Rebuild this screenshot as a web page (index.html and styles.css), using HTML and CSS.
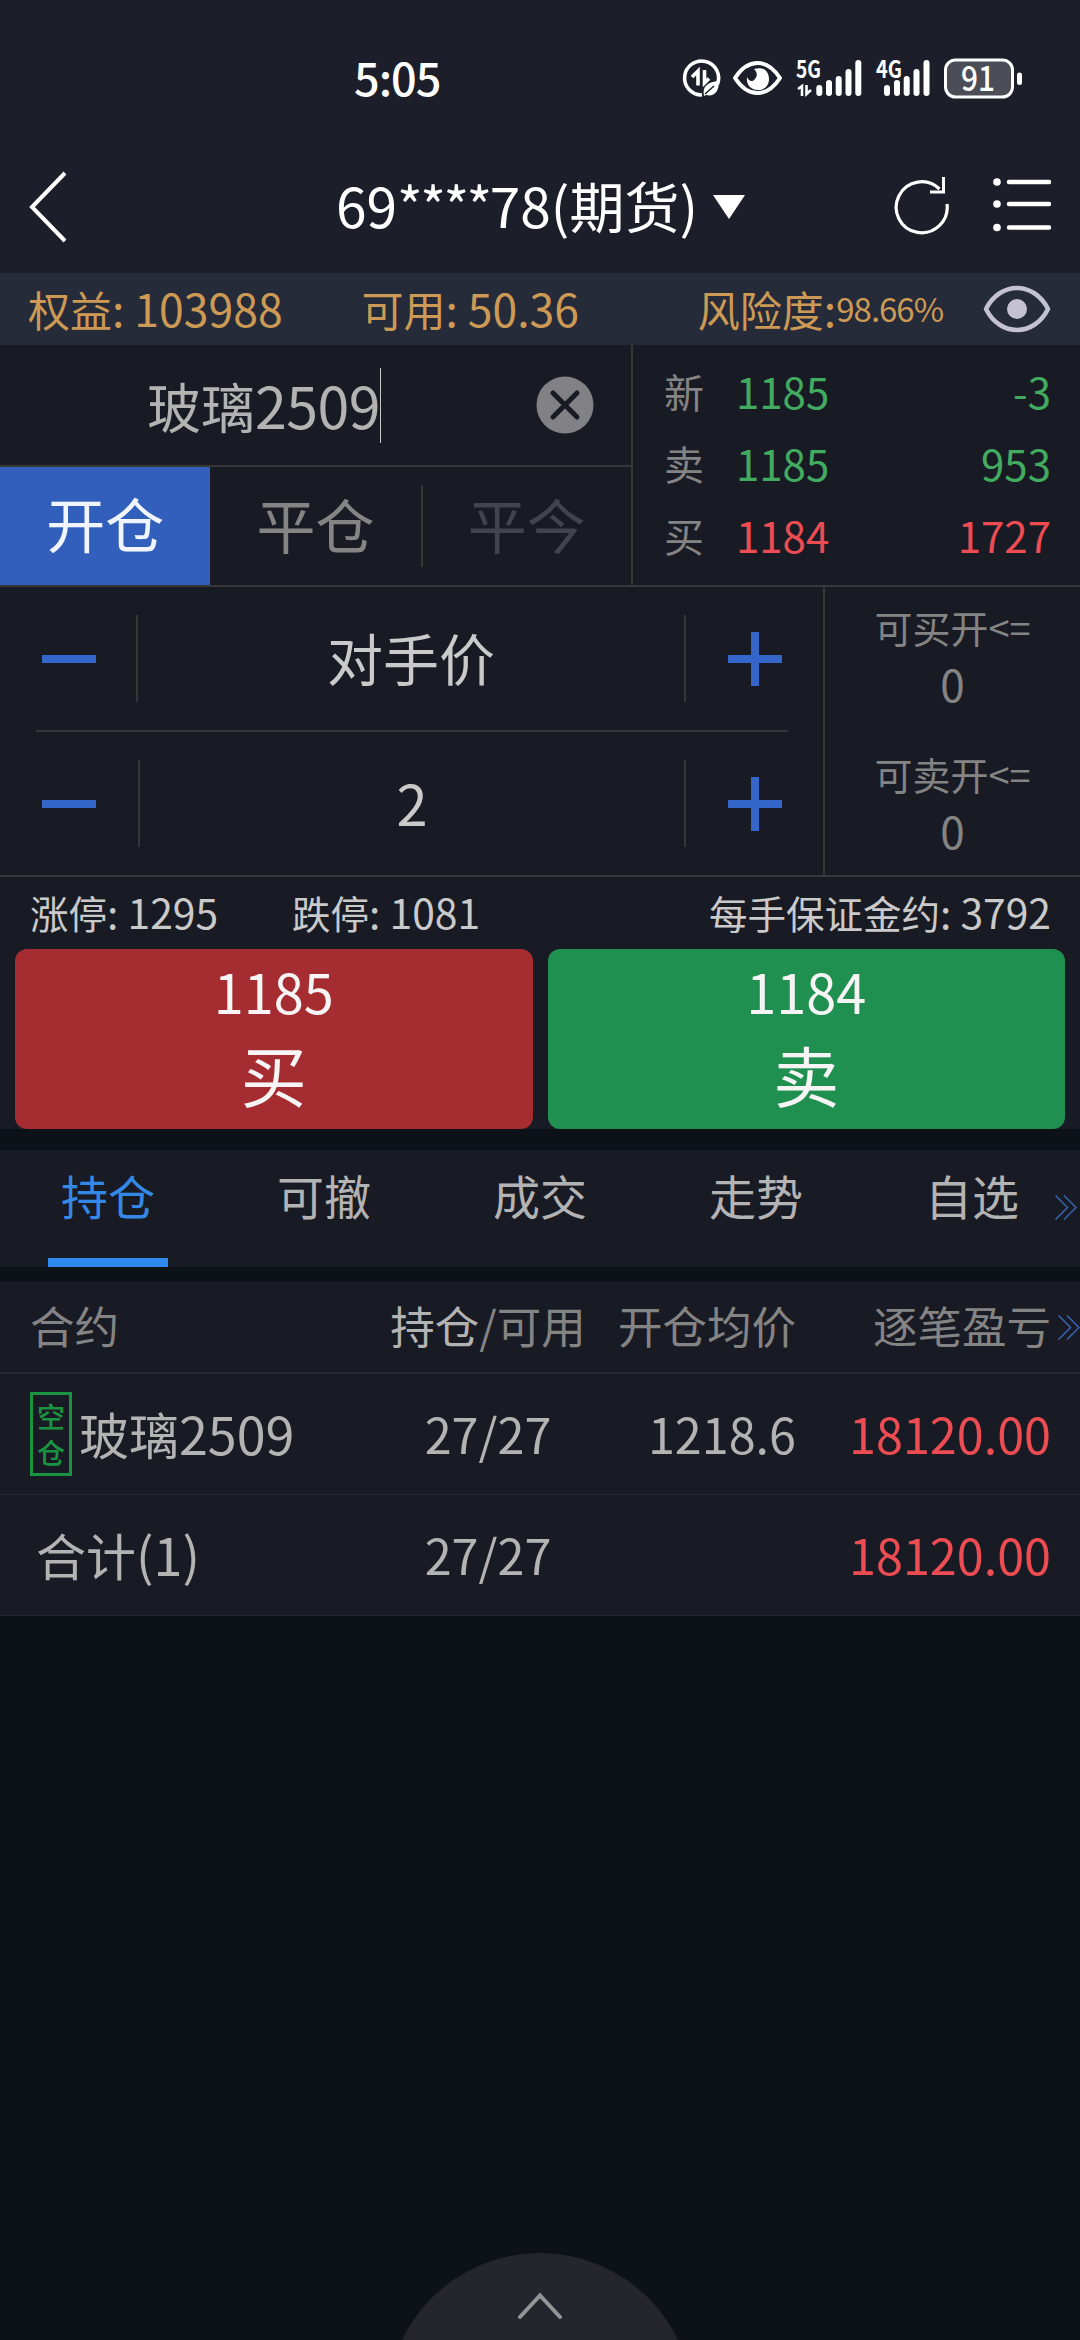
FILE: index.html
```
<!DOCTYPE html>
<html lang="zh-CN">
<head>
    <meta charset="UTF-8">
    <meta name="viewport" content="width=device-width, initial-scale=1.0">
    <title>期货交易</title>
    <link rel="stylesheet" href="styles.css">
</head>
<body>
    <div class="status-bar">
        <span class="time">5:05</span>
        <svg class="status-icons" width="390" height="50" viewBox="0 0 390 50">
            <!-- 省流量 -->
            <path d="M36.5 30A17 17 0 1 0 21 41" fill="none" stroke="#fff" stroke-width="3.6"/>
            <path d="M11 23L17 17V31.500M23.500 16V29L28 24.500" fill="none" stroke="#fff" stroke-width="3.600"/>
            <path d="M23 42C21 32 27 28 38 27C38 38 33 43 25 41Z" fill="#fff"/>
            <path d="M24 40L33 32" stroke="#1c1f29" stroke-width="1.500"/>
            <!-- 护眼模式 -->
            <path d="M54 24C67 4 86 4 99 24C86 44 67 44 54 24Z" fill="none" stroke="#fff" stroke-width="4" stroke-linejoin="round"/>
            <path d="M73 15C83 12 88 18 88 25C88 32 83 36 77 36C70 36 65 31 66 23C68 28 72 28 74 25C77 21 76 18 73 15Z" fill="#fff"/>
            <text x="115" y="24" class="net" textLength="25" lengthAdjust="spacingAndGlyphs">5G</text>
            <path d="M117 35L121 32V42M125.500 31V40L130 36" fill="none" stroke="#fff" stroke-width="2.600"/>
            <path d="M138.300 34V39M148 29V39M157.700 25V39M167.500 18V39M177.300 9V39" stroke="#fff" stroke-width="6" stroke-linecap="round"/>
            <text x="195" y="24" class="net" textLength="26" lengthAdjust="spacingAndGlyphs">4G</text>
            <path d="M206 34V39M216 29V39M225.700 25V39M235.500 18V39M245.500 9V39" stroke="#fff" stroke-width="6" stroke-linecap="round"/>
            <!-- 电量 -->
            <rect x="264.500" y="6" width="67" height="37" rx="10" fill="#4c4e57" stroke="#fff" stroke-width="3"/>
            <rect x="336" y="18.500" width="5" height="12.500" rx="2.500" fill="#fff"/>
            <text x="297" y="36.500" class="battery" textLength="34" lengthAdjust="spacingAndGlyphs">91</text>
        </svg>
    </div>

    <div class="nav-bar">
        <svg class="back" width="40" height="74" viewBox="0 0 40 74">
            <path d="M36 3L3 37L36 71" fill="none" stroke="#fff" stroke-width="4"/>
        </svg>
        <div class="account">
            <span class="account-name">69<span class="stars">****</span>78(期货)</span>
            <svg width="32" height="24" viewBox="0 0 32 24"><path d="M0 0H32L16 24Z" fill="#fff"/></svg>
        </div>
        <div class="nav-actions">
            <svg width="56" height="60" viewBox="0 0 56 60">
                <path d="M53 28A25.500 25.500 0 1 1 45.500 13" fill="none" stroke="#fff" stroke-width="3.200"/>
                <path d="M49.500 1V16H36" fill="none" stroke="#fff" stroke-width="3"/>
            </svg>
            <svg width="58" height="60" viewBox="0 0 58 60">
                <path d="M16 6H56M16 28H56M16 51.500H56" stroke="#fff" stroke-width="4.500" stroke-linecap="round"/>
                <circle cx="4" cy="6" r="3.800" fill="#fff"/>
                <circle cx="4" cy="28" r="3.800" fill="#fff"/>
                <circle cx="4" cy="51.500" r="3.800" fill="#fff"/>
            </svg>
        </div>
    </div>

    <div class="funds">
        <span class="equity">权益<span class="num">: 103988</span></span>
        <span class="available">可用<span class="num">: 50.36</span></span>
        <span class="risk">风险度<span class="num">:</span></span>
        <span class="risk-value">98.66%</span>
        <svg width="68" height="48" viewBox="0 0 68 48">
            <path d="M3 24C17-4 51-4 65 24C51 52 17 52 3 24Z" fill="none" stroke="#c4c2d2" stroke-width="4.500" stroke-linejoin="round"/>
            <circle cx="34" cy="24" r="10" fill="#c4c2d2"/>
        </svg>
    </div>

    <div class="contract">
        <div class="contract-left">
            <div class="contract-input">
                <span>玻璃<span class="num">2509</span></span>
                <i class="cursor"></i>
                <svg class="clear" width="58" height="58" viewBox="0 0 58 58">
                    <circle cx="29" cy="29" r="28.500" fill="#828186"/>
                    <path d="M17 17L41 41M41 17L17 41" stroke="#191b24" stroke-width="5" stroke-linecap="round"/>
                </svg>
            </div>
            <div class="offset-tabs">
                <div class="offset active">开仓</div>
                <div class="offset">平仓</div>
                <div class="offset disabled">平今</div>
            </div>
        </div>
        <div class="quotes">
            <div class="quote green"><label>新</label><span>1185</span><b>-3</b></div>
            <div class="quote green"><label>卖</label><span>1185</span><b>953</b></div>
            <div class="quote red"><label>买</label><span>1184</span><b>1727</b></div>
        </div>
    </div>

    <div class="order">
        <div class="steppers">
            <div class="stepper order-price">
                <div class="step minus"><i></i></div>
                <div class="step-value">对手价</div>
                <div class="step plus"><i></i></div>
            </div>
            <div class="stepper order-amount">
                <div class="step minus"><i></i></div>
                <div class="step-value">2</div>
                <div class="step plus"><i></i></div>
            </div>
        </div>
        <div class="openable">
            <div><p>可买开&lt;=</p><p class="count">0</p></div>
            <div><p>可卖开&lt;=</p><p class="count">0</p></div>
        </div>
    </div>

    <div class="limits">
        <span class="limit-up">涨停<span class="num">: 1295</span></span>
        <span>跌停<span class="num">: 1081</span></span>
        <span class="margin">每手保证金约<span class="num">: 3792</span></span>
    </div>
    <div class="trade-buttons">
        <div class="trade buy"><span>1185</span><b>买</b></div>
        <div class="trade sell"><span>1184</span><b>卖</b></div>
    </div>

    <div class="tabs">
        <div class="tab active">持仓</div>
        <div class="tab">可撤</div>
        <div class="tab">成交</div>
        <div class="tab">走势</div>
        <div class="tab">自选</div>
        <svg class="more tabs-more" width="22" height="25" viewBox="0 0 22 25"><path d="M.5.500L12.500 12.500L.5 24.500M9 .5L21 12.500L9 24.500"/></svg>
    </div>

    <div class="positions">
        <div class="row head">
            <div class="name">合约</div>
            <div class="volume"><em>持仓</em>/可用</div>
            <div class="price">开仓均价</div>
            <div class="profit">逐笔盈亏</div>
            <svg class="more head-more" width="22" height="25" viewBox="0 0 22 25"><path d="M.5.500L12.500 12.500L.5 24.500M9 .5L21 12.500L9 24.500"/></svg>
        </div>
        <div class="row">
            <div class="name"><span class="side">空仓</span>玻璃<span class="num">2509</span></div>
            <div class="volume">27/27</div>
            <div class="price">1218.6</div>
            <div class="profit">18120.00</div>
        </div>
        <div class="row total">
            <div class="name">合计<span class="num">(1)</span></div>
            <div class="volume">27/27</div>
            <div class="price"></div>
            <div class="profit">18120.00</div>
        </div>
    </div>

    <div class="bottom">
        <div class="drawer">
            <svg width="44" height="28" viewBox="0 0 44 28"><path d="M2 25L22 3.500L42 25" fill="none" stroke="#949496" stroke-width="4" stroke-linecap="round"/></svg>
        </div>
    </div>
</body>
</html>
```
FILE: styles.css
```
* {
    margin: 0;
    padding: 0;
    box-sizing: border-box;
}

body {
    width: 1080px;
    height: 2340px;
    display: flex;
    flex-direction: column;
    overflow: hidden;
    background-color: #0d1118;
    color: #b4b3b4;
    font-family: "Noto Sans CJK SC", sans-serif;
    white-space: nowrap;
}

svg {
    display: block;
    flex: none;
}

b, em, i {
    font-weight: normal;
    font-style: normal;
}

.num {
    font-size: 1.06em;
}

.green { color: #43ab60; }
.red { color: #ee4c53; }

/* 顶部 */
.status-bar {
    height: 140px;
    display: flex;
    align-items: flex-start;
    padding: 54px 0 0 354px;
    background-color: #1c1f29;
    color: #fff;
}

.status-icons {
    overflow: visible;
}

.time {
    width: 327px;
    font-size: 45px;
    font-weight: 500;
    line-height: 45px;
    letter-spacing: -1px;
}

.net {
    fill: #fff;
    font-size: 24px;
    font-weight: 700;
}

.battery {
    fill: #fff;
    font-size: 34px;
    font-weight: 500;
    text-anchor: middle;
}

.nav-bar {
    height: 133px;
    display: flex;
    align-items: center;
    padding: 0 29px 0 29px;
    background-color: #1c1f29;
    color: #fff;
}

.account {
    display: flex;
    align-items: center;
    gap: 15px;
    margin-left: 267px;
    font-size: 55px;
    line-height: 60px;
}

.account-name {
    padding-bottom: 5px;
}

.stars {
    letter-spacing: -2.5px;
}

.nav-actions {
    display: flex;
    gap: 43px;
    margin-left: auto;
    padding-bottom: 2px;
}

.funds {
    height: 72px;
    display: flex;
    align-items: center;
    padding: 0 29px 2px 28px;
    background-color: #262b3a;
    color: #cc9a55;
    font-size: 42px;
    line-height: 60px;
}

.equity {
    width: 334px;
}

.available {
    width: 337px;
}

.risk-value {
    width: 147px;
    font-size: 33px;
    letter-spacing: -1px;
}

.funds svg {
    margin-top: 2px;
}

/* 合约与盘口 */
.contract {
    height: 242px;
    display: flex;
    background-color: #191b24;
    border-bottom: 2px solid #37373a;
}

.contract-left {
    width: 633px;
    border-right: 2px solid #37373a;
}

.contract-input {
    height: 122px;
    display: flex;
    align-items: center;
    padding-left: 147px;
    border-bottom: 2px solid #37373a;
    font-size: 54px;
    line-height: 60px;
}

.contract-input .num {
    letter-spacing: -0.5px;
}

.cursor {
    width: 1px;
    height: 75px;
    background-color: #c8c8c8;
}

.clear {
    margin-left: auto;
    margin-right: 37px;
}

.offset-tabs {
    height: 118px;
    display: flex;
    align-items: center;
}

.offset {
    width: 211px;
    padding-bottom: 4px;
    text-align: center;
    font-size: 59px;
    line-height: 78px;
    color: #858484;
}

.offset.active {
    height: 118px;
    padding-bottom: 0;
    line-height: 112px;
    background-color: #315fbb;
    color: #f0f5ff;
}

.offset.disabled {
    border-left: 2px solid #37373a;
    color: #41434e;
}

.quotes {
    flex: 1;
    padding: 10px 29px 0 31px;
}

.quote {
    height: 72px;
    display: flex;
    align-items: center;
    font-size: 42px;
    line-height: 60px;
}

.quote label {
    width: 72px;
    font-size: 40px;
    color: #858484;
}

.quote b {
    margin-left: auto;
}

/* 下单 */
.order {
    height: 290px;
    display: flex;
    background-color: #191b24;
    border-bottom: 2px solid #37373a;
}

.steppers {
    width: 825px;
    padding: 0 35px 0 36px;
    border-right: 2px solid #37373a;
}

.stepper {
    height: 143px;
    display: flex;
    align-items: center;
}

.order-price {
    height: 145px;
    border-bottom: 2px solid #37373a;
}

.step {
    height: 87px;
    display: flex;
    align-items: center;
}

.minus {
    width: 102px;
    padding-left: 6px;
    border-right: 2px solid #37373a;
}

.order-amount .minus {
    width: 104px;
}

.plus {
    width: 104px;
    padding-left: 42px;
    border-left: 2px solid #37373a;
}

.step i {
    width: 54px;
    height: 8px;
    background-color: #3466c9;
}

.plus i {
    height: 54px;
    background: linear-gradient(#3466c9, #3466c9) center / 100% 8px no-repeat,
                linear-gradient(#3466c9, #3466c9) center / 8px 100% no-repeat;
}

.step-value {
    flex: 1;
    padding-bottom: 4px;
    text-align: center;
    color: #cacaca;
    font-size: 56px;
    line-height: 80px;
}

.openable {
    flex: 1;
    padding-top: 12px;
    text-align: center;
    color: #858484;
    font-size: 38px;
}

.openable div {
    height: 147px;
}

.openable p {
    line-height: 56px;
}

.openable .count {
    font-size: 44px;
}

.limits {
    height: 72px;
    display: flex;
    align-items: center;
    padding: 0 29px 2px 30px;
    background-color: #191b24;
    color: #cacaca;
    font-size: 38.5px;
    line-height: 56px;
}

.limit-up {
    width: 262px;
}

.margin {
    margin-left: auto;
}

.trade-buttons {
    height: 180px;
    display: flex;
    gap: 15px;
    padding: 0 15px;
    background-color: #191b24;
}

.trade {
    flex: 1;
    display: flex;
    flex-direction: column;
    align-items: center;
    padding-top: 12px;
    border-radius: 12px;
    color: #f6f4f4;
    font-size: 54px;
    line-height: 60px;
}

.trade b {
    margin-top: 8px;
    font-size: 66px;
    line-height: 88px;
}

.buy { background-color: #a52d31; }
.sell { background-color: #209051; }

/* 列表标签 */
.tabs {
    position: relative;
    height: 117px;
    display: flex;
    margin-top: 21px;
    background-color: #191b24;
    font-size: 47px;
    line-height: 89px;
}

.tab {
    width: 216px;
    display: flex;
    flex-direction: column;
    align-items: center;
}

.tab.active {
    color: #3488e6;
}

.tab.active::after {
    content: "";
    width: 120px;
    height: 9px;
    margin-top: auto;
    background-color: #2f89ee;
}

.more {
    position: absolute;
    fill: none;
    stroke: #3a63b4;
    stroke-width: 1.5px;
}

.tabs-more {
    right: 3px;
    top: 45px;
}

.head-more {
    right: 0;
    top: 33px;
}

/* 持仓列表 */
.positions {
    margin-top: 15px;
}

.row {
    position: relative;
    height: 121px;
    display: flex;
    align-items: center;
    padding: 0 29px 2px 30px;
    background-color: #191b24;
    border-bottom: 1px solid #25282f;
    font-size: 48.5px;
    line-height: 70px;
}

.row.head {
    height: 92px;
    padding-bottom: 4px;
    border-bottom-width: 2px;
    color: #858484;
    font-size: 44.5px;
}

.name {
    width: 340px;
    display: flex;
    align-items: center;
    font-size: 50px;
}

.head .name {
    font-size: 44.5px;
}

.total .name {
    padding-left: 6px;
}

.name .num {
    font-size: 52px;
}

.side {
    width: 42px;
    height: 84px;
    margin: 2px 7px 0 0;
    padding: 3px 4px;
    border: 3px solid #1a9440;
    color: #1a9440;
    font-size: 28px;
    font-weight: 500;
    line-height: 36px;
    white-space: normal;
}

.volume {
    width: 236px;
    text-align: center;
}

.head .volume em {
    color: #b4b3b4;
}

.price {
    width: 190px;
    text-align: right;
}

.profit {
    flex: 1;
    text-align: right;
    color: #ee4c53;
}

.head .profit {
    color: #858484;
}

/* 底部抽屉 */
.bottom {
    height: 87px;
    margin-top: auto;
    overflow: hidden;
}

.drawer {
    width: 306px;
    height: 306px;
    margin: 0 auto;
    padding: 39px 131px 0;
    border-radius: 50%;
    background-color: #25252d;
}
```
